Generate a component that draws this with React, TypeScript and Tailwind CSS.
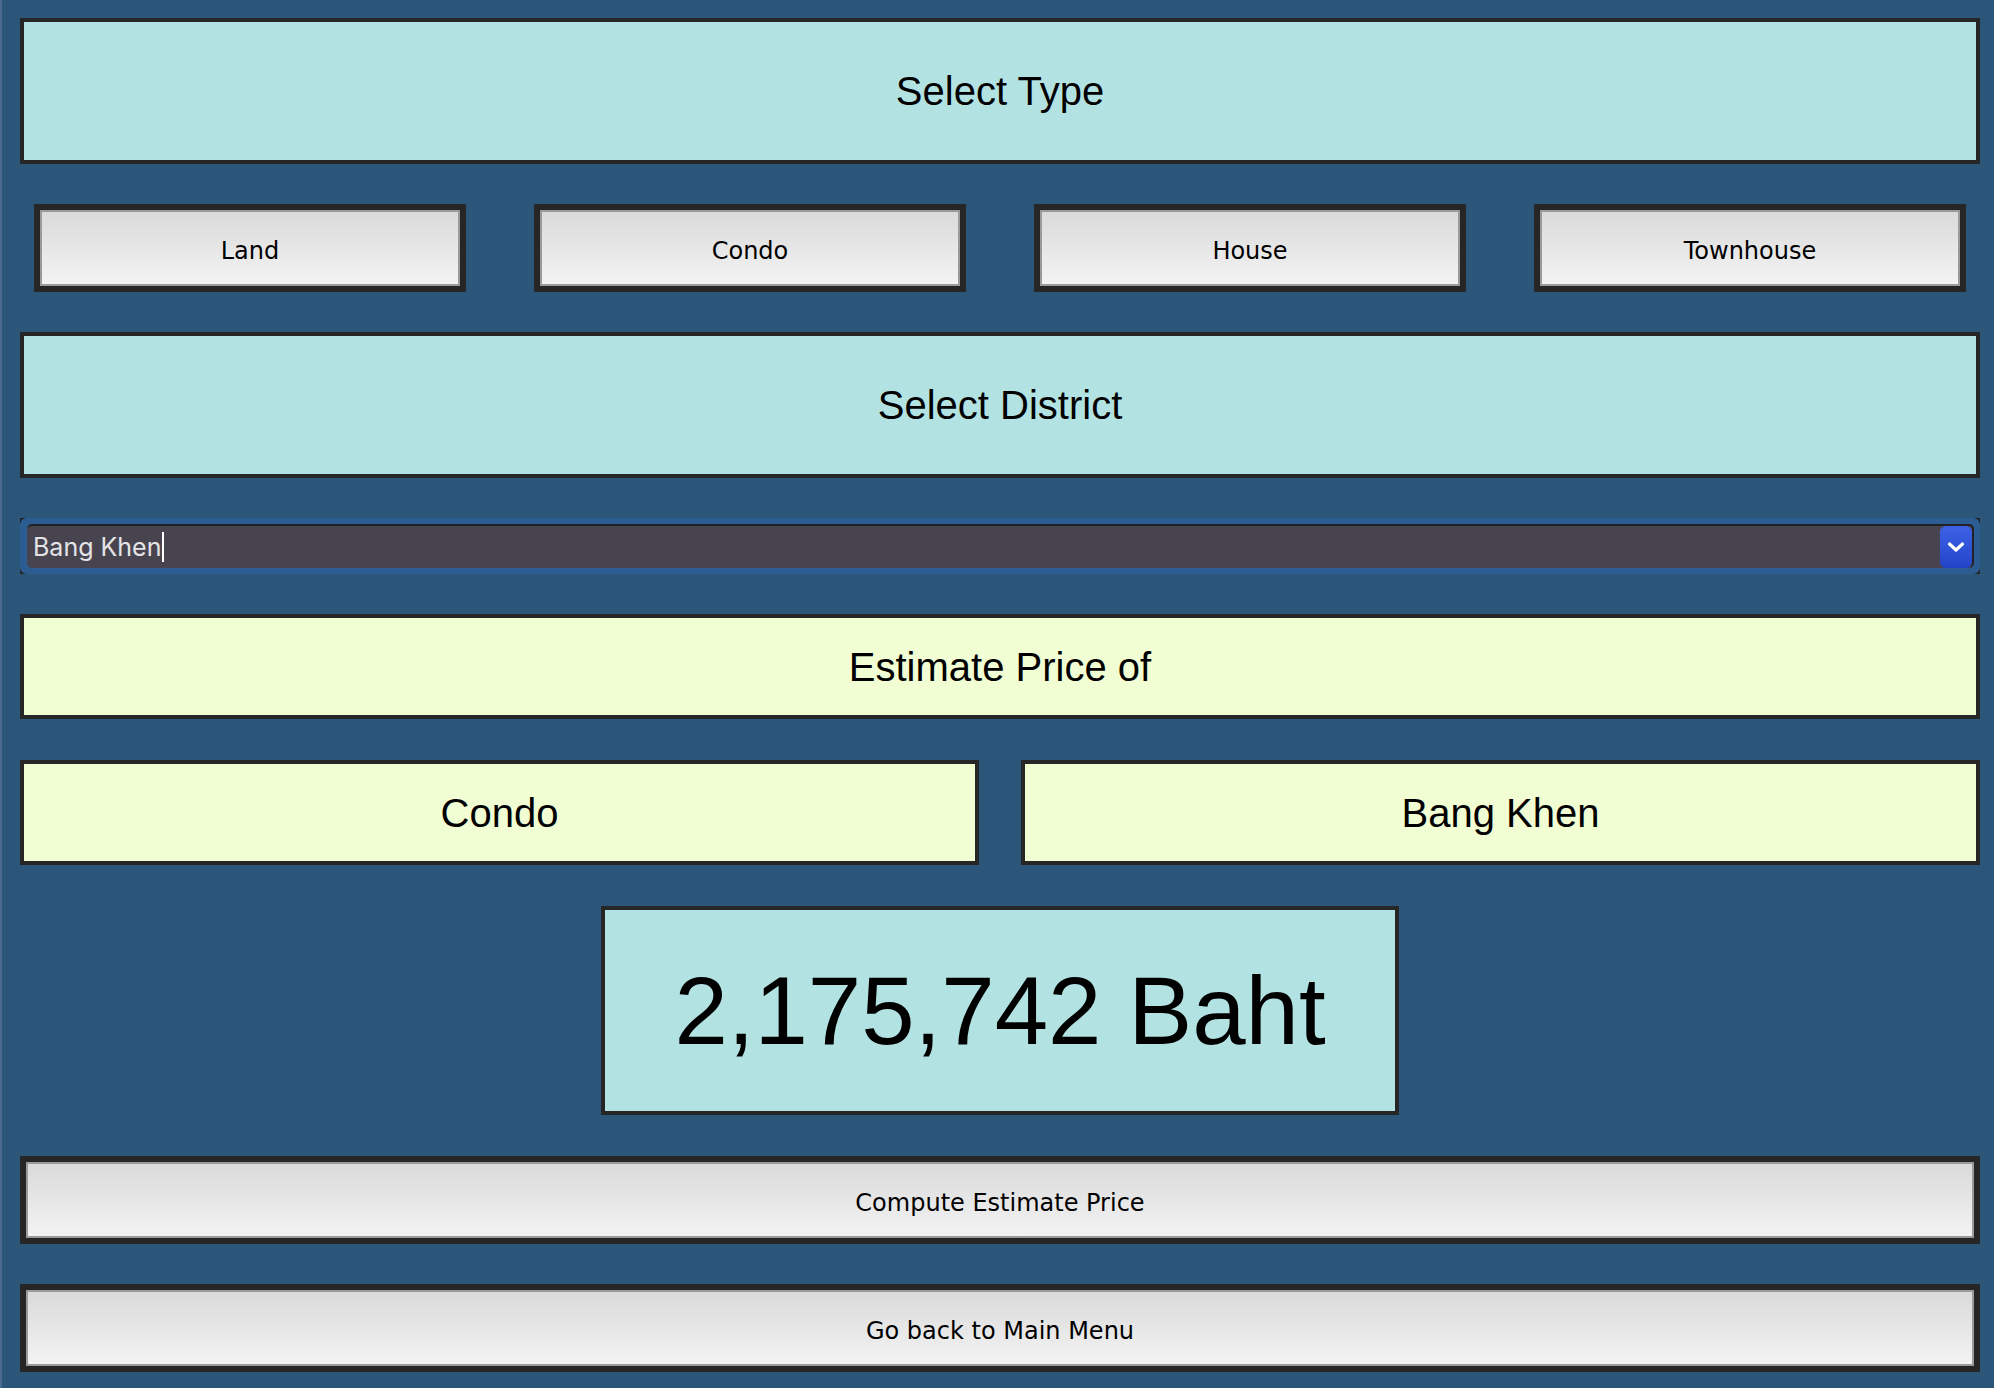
import React from "react";

const sans = "font-['Liberation_Sans',Arial,sans-serif]";
const ui = "font-['DejaVu_Sans',sans-serif]";

function LabelBox({ text, className }: { text: string; className: string }) {
  return (
    <div
      className={`flex items-center justify-center border-4 border-[#262626] text-[40px] leading-none text-black ${sans} ${className}`}
    >
      {text}
    </div>
  );
}

function GrayButton({ label }: { label: string }) {
  return (
    <button className="h-[88px] w-full border-[6px] border-[#262626] bg-[#262626] p-0">
      <div
        className={`flex h-full w-full items-center justify-center border-2 border-[#9a9a9a] bg-linear-to-b from-[#dadada] to-[#f3f3f3] pt-[6px] text-[24px] leading-none text-black ${ui}`}
      >
        {label}
      </div>
    </button>
  );
}

function DistrictSelect({ value }: { value: string }) {
  return (
    <div className="h-[56px] bg-[#262626]">
      <div className="flex h-full w-full rounded-[7px] bg-[#2b5d92] pt-[6px] pr-[6px] pb-[6px] pl-[7px]">
        <div className="flex flex-1 items-center rounded-[5px] border-t-2 border-r-2 border-[#222226] bg-[#48444f] pl-[6px]">
          <span className="font-['Inter',sans-serif] text-[25px] leading-none text-[#e4e4e6]">
            {value}
          </span>
          <span className="ml-[1px] h-[30px] w-[2px] bg-white" />
          <div className="ml-auto flex h-[42px] w-[32px] items-center justify-center rounded-[6px] bg-linear-to-b from-[#3d62e6] to-[#2444c8]">
            <svg width="18" height="12" viewBox="0 0 18 12" fill="none">
              <polyline
                points="2.5,3 9,9 15.5,3"
                stroke="white"
                strokeWidth="3.2"
                strokeLinecap="round"
                strokeLinejoin="round"
              />
            </svg>
          </div>
        </div>
      </div>
    </div>
  );
}

export default function App() {
  const types = ["Land", "Condo", "House", "Townhouse"];

  return (
    <div className="flex h-[1388px] w-full flex-col gap-10 overflow-hidden border-l-2 border-[#4a6b8d] bg-[#2c5679] pt-[18px] pr-[14px] pl-[18px]">
      <LabelBox text="Select Type" className="h-[146px] shrink-0 bg-[#b2e3e2]" />

      {/* type buttons */}
      <div className="grid shrink-0 grid-cols-4 gap-[68px] px-[14px]">
        {types.map((t) => (
          <GrayButton key={t} label={t} />
        ))}
      </div>

      <LabelBox text="Select District" className="h-[146px] shrink-0 bg-[#b2e3e2]" />

      <DistrictSelect value="Bang Khen" />

      <LabelBox text="Estimate Price of" className="h-[105px] shrink-0 bg-[#f1fdd2]" />

      <div className="mt-px grid shrink-0 grid-cols-2 gap-[42px]">
        <LabelBox text="Condo" className="h-[105px] bg-[#f1fdd2]" />
        <LabelBox text="Bang Khen" className="h-[105px] bg-[#f1fdd2]" />
      </div>

      <div className="mt-px flex shrink-0 justify-center">
        <div
          className={`flex h-[209px] w-[798px] items-center justify-center border-4 border-[#262626] bg-[#b2e3e2] text-[96px] leading-none text-black ${sans}`}
        >
          2,175,742 Baht
        </div>
      </div>

      <div className="mt-px shrink-0">
        <GrayButton label="Compute Estimate Price" />
      </div>

      <div className="shrink-0">
        <GrayButton label="Go back to Main Menu" />
      </div>
    </div>
  );
}
